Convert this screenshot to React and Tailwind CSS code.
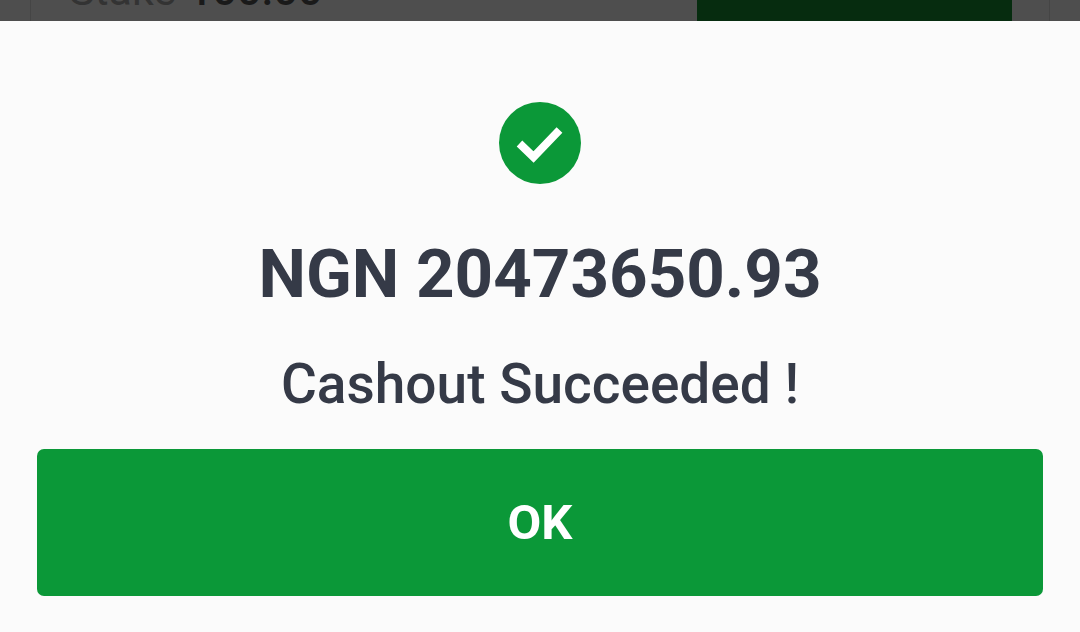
import React from 'react';

// Cashout success dialog, with the dimmed bet card showing above it
const App = () => {
  return (
    <div className="w-[1080px] h-[632px] overflow-hidden flex flex-col bg-[#fbfbfb] font-['Roboto',sans-serif]">
      {/* Dimmed bet card behind the dialog */}
      <div className="h-[21px] shrink-0 overflow-hidden bg-[#4e4e4e] px-[30px]">
        <div className="h-[21px] flex items-end justify-between border-x border-[#454545] pl-[38px] pr-[37px]">
          <div className="flex gap-3 text-[43px] leading-[48px] mb-[7px] whitespace-nowrap">
            <span className="text-[#333333]">Stake</span>
            <span className="font-medium text-[#1a1a1a]">100.00</span>
          </div>
          <div className="w-[315px] h-[21px] bg-[#062c0f]" />
        </div>
      </div>

      {/* Dialog */}
      <div className="flex-1 flex flex-col items-center px-[37px]">
        <svg className="mt-[81px] shrink-0" width="82" height="82" viewBox="0 0 82 82">
          <circle cx="41" cy="41" r="41" fill="#0b9838" />
          <path d="M20.5 41.5 L34.5 55 L60.5 28" fill="none" stroke="#ffffff" strokeWidth="8" />
        </svg>
        <div className="mt-[50px] text-[67.3px] leading-[80px] font-bold text-[#353a47] whitespace-nowrap">
          NGN 20473650.93
        </div>
        <div className="mt-[40px] text-[55px] leading-[60px] font-medium text-[#353a47] whitespace-nowrap">
          Cashout Succeeded !
        </div>
        <button className="mt-[35px] w-full h-[147px] rounded-[7px] bg-[#0b9838] text-white text-[49px] font-bold flex items-center justify-center">
          OK
        </button>
      </div>
    </div>
  );
};

export default App;
